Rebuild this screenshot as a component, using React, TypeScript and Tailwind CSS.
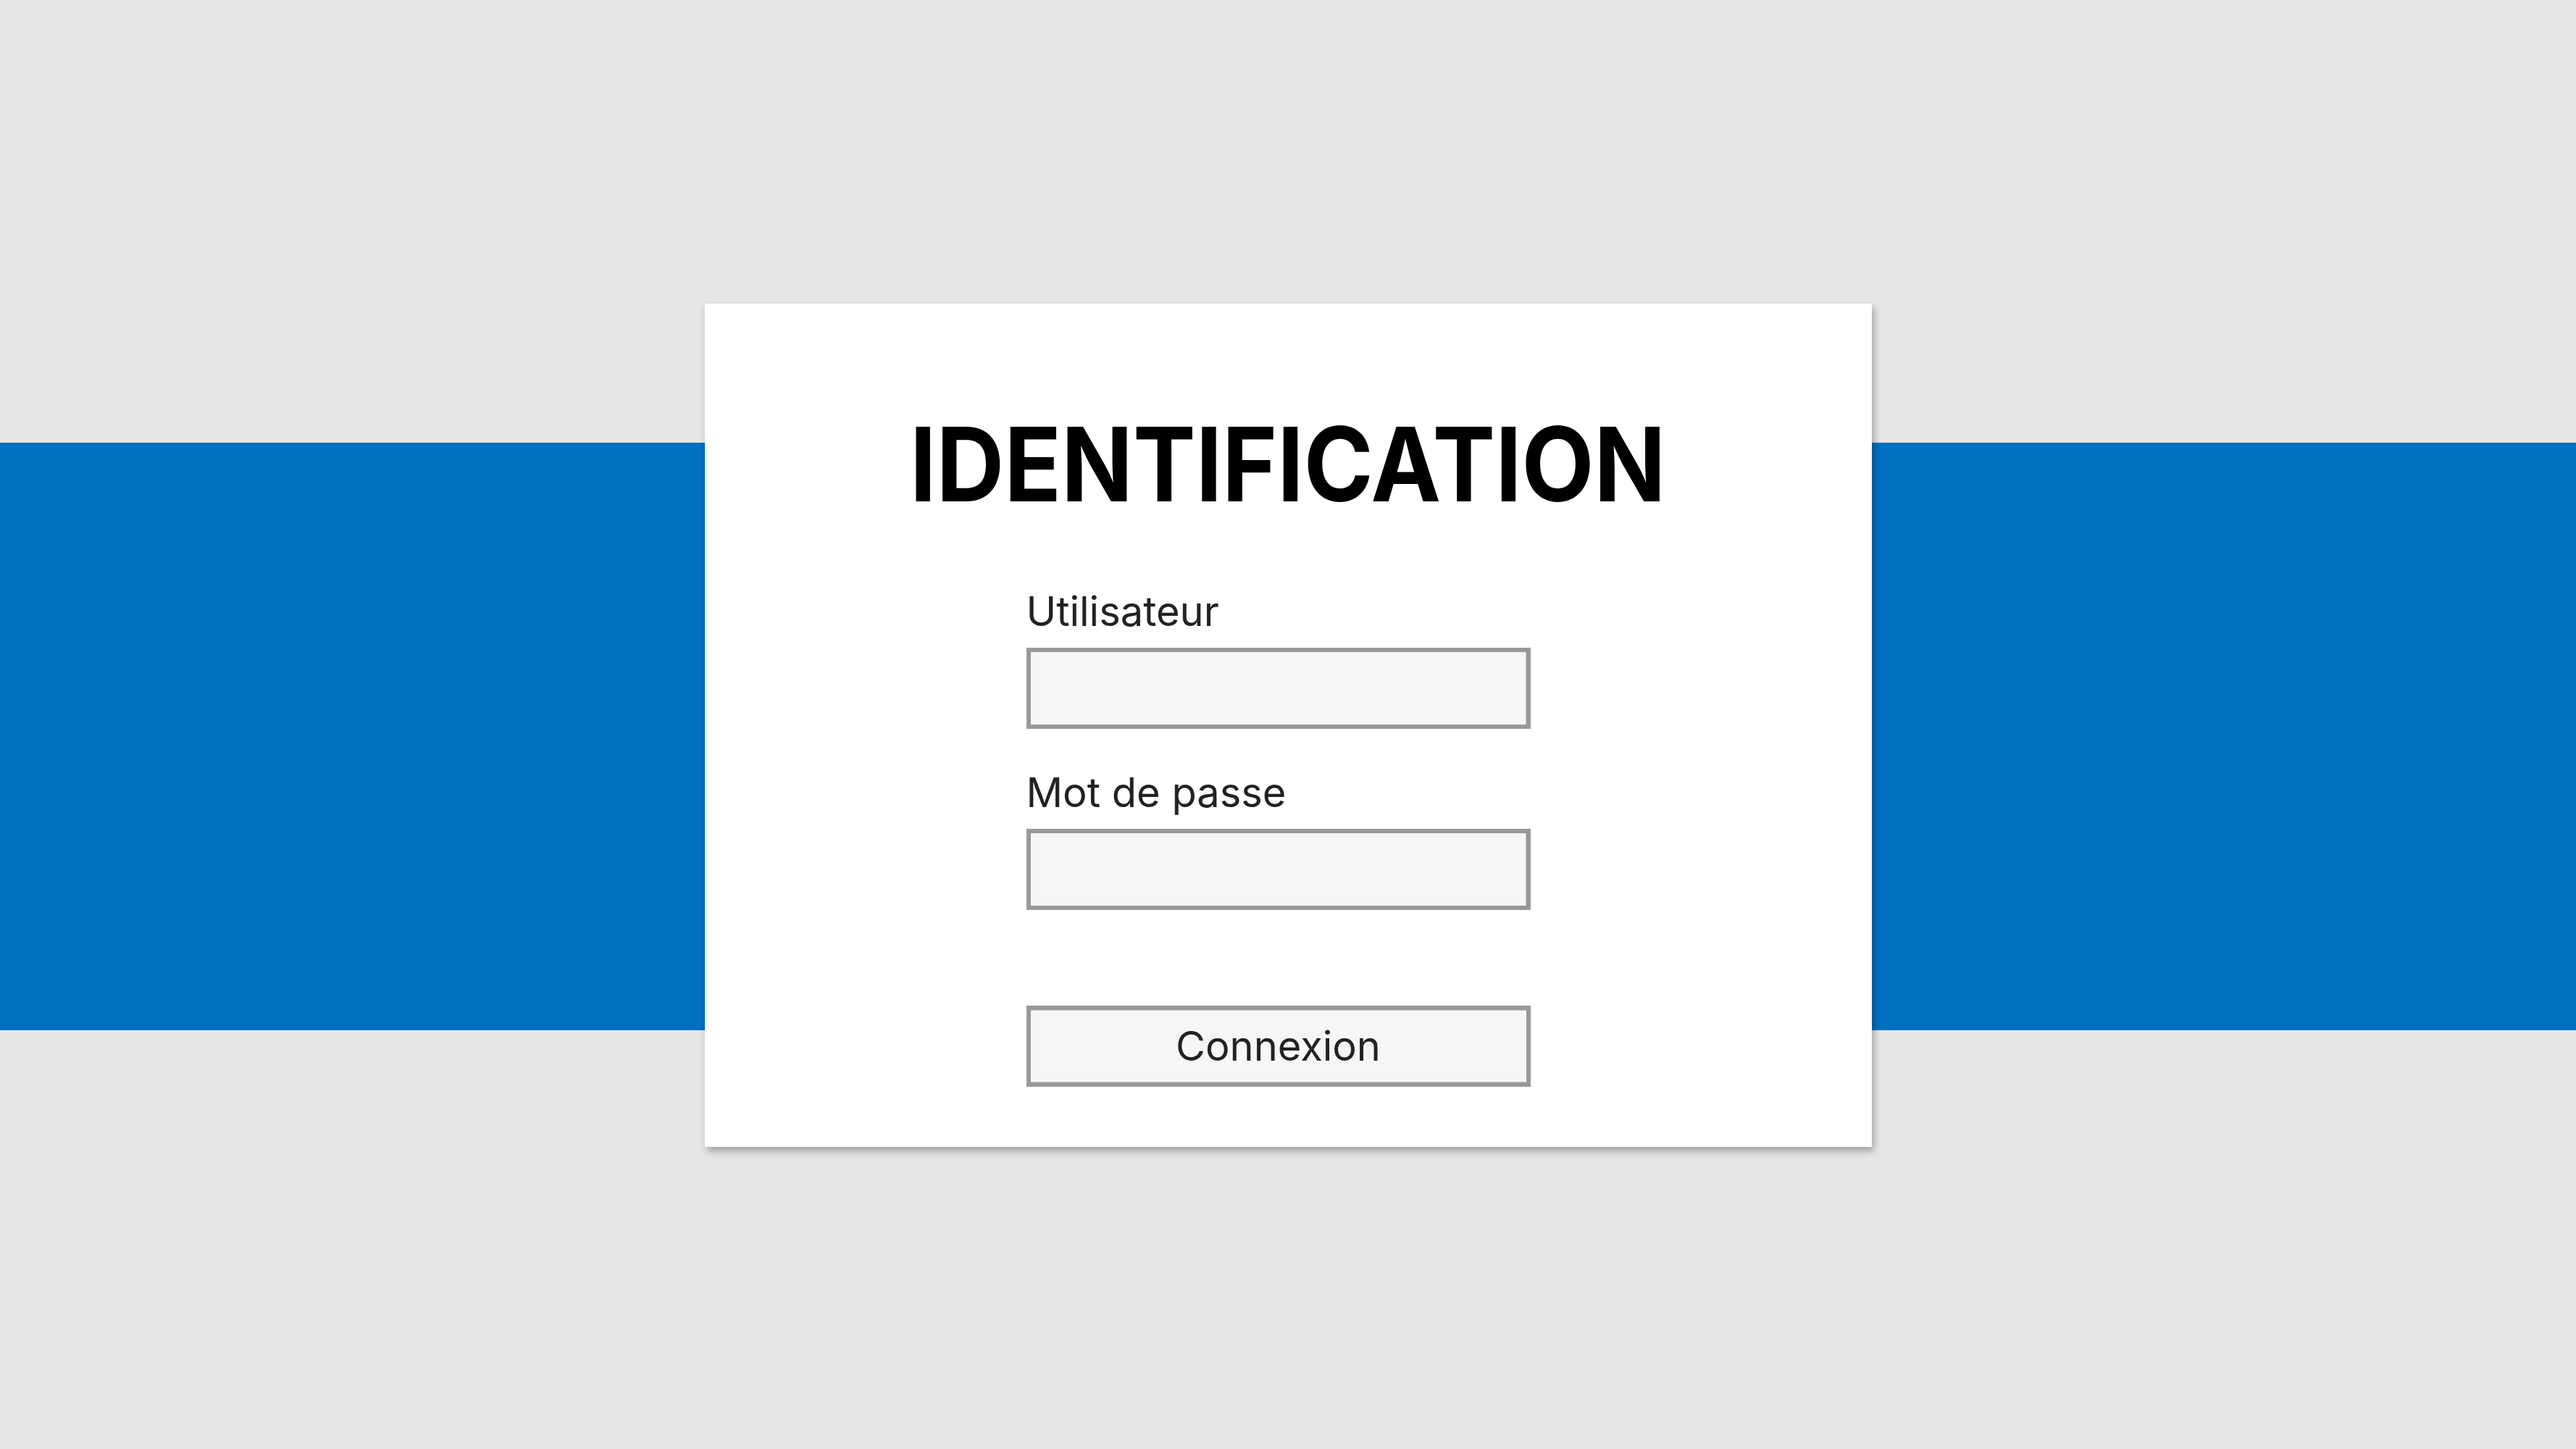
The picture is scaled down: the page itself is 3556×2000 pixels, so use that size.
import React from 'react';

const Field: React.FC<{ label: string; type?: string; first?: boolean }> = ({ label, type = 'text', first }) => {
  return (
    <div className={first ? 'flex flex-col' : 'mt-[60px] flex flex-col'}>
      <label className="block h-[56px] text-[56px] leading-none text-[#222222]">{label}</label>
      <input
        type={type}
        className="mt-[22px] h-[112px] w-full border-[6px] border-[#999999] bg-[#f6f6f6] shadow-[inset_-1px_0_0_#c2c2c2] outline-none"
      />
    </div>
  );
};

const App: React.FC = () => {
  return (
    <div className="grid h-[2000px] w-full bg-[#e6e6e6] font-['Inter',sans-serif]">
      {/* blue band behind the card */}
      <div className="col-start-1 row-start-1 mt-[611px] h-[811px] self-start bg-[#0070c0]" />

      <div className="col-start-1 row-start-1 mt-[419px] h-[1164px] w-[1611px] self-start justify-self-center bg-white shadow-[3px_6px_10px_rgba(0,0,0,0.3)]">
        <h1 className="pt-[150px] text-center text-[142px] font-bold leading-none text-black">
          <span className="inline-block scale-x-[0.914]">IDENTIFICATION</span>
        </h1>

        <form className="ml-[444px] mt-[105px] w-[696px]" onSubmit={(e) => e.preventDefault()}>
          <Field label="Utilisateur" first />
          <Field label="Mot de passe" type="password" />
          <button
            type="submit"
            className="mt-[132px] h-[112px] w-full border-[6px] border-[#999999] bg-[#f6f6f6] text-[56px] leading-none text-[#222222] shadow-[inset_0_1px_0_#c4c4c4,inset_0_-1px_0_#c4c4c4]"
          >
            Connexion
          </button>
        </form>
      </div>
    </div>
  );
};

export default App;
